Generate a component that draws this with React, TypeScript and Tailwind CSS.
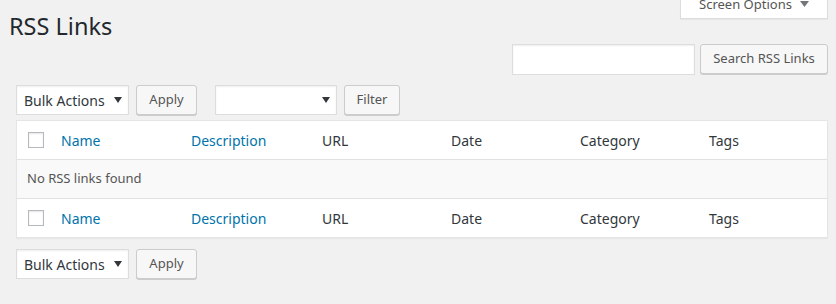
const cols = ['Name', 'Description', 'URL', 'Date', 'Category', 'Tags'];
const linked = ['Name', 'Description'];

function Caret() {
  return (
    <svg width="8" height="6" viewBox="0 0 8 6" className="shrink-0">
      <path d="M0 0h8L4 6z" fill="#32373c" />
    </svg>
  );
}

function Select({ label, width }: { label: string; width: string }) {
  return (
    <div
      className={`${width} flex h-[30px] items-center justify-between border border-[#ddd] bg-white pl-[7px] pr-[6px] text-[14px] text-[#32373c] shadow-[inset_0_1px_2px_rgba(0,0,0,0.07)]`}
    >
      <span>{label}</span>
      <Caret />
    </div>
  );
}

function Button({ label, width }: { label: string; width: string }) {
  return (
    <button
      className={`${width} h-[30px] rounded-[3px] border border-[#ccc] bg-[#f7f7f7] text-[13px] text-[#555] shadow-[0_1px_0_#ccc]`}
    >
      {label}
    </button>
  );
}

function Checkbox() {
  return (
    <div className="h-[16px] w-[16px] border border-[#b4b9be] bg-white shadow-[inset_0_1px_2px_rgba(0,0,0,0.1)]" />
  );
}

function HeaderRow({ top }: { top?: boolean }) {
  return (
    <div
      className={`grid h-[39px] grid-cols-[34px_130px_131px_129px_129px_129px_1fr] items-center bg-white ${top ? 'border-b' : 'border-t'} border-[#e1e1e1]`}
    >
      <div className="flex justify-end pr-[7px]">
        <Checkbox />
      </div>
      {cols.map((c) => (
        <div
          key={c}
          className={`pl-[10px] text-[14px] ${linked.includes(c) ? 'text-[#0073aa]' : 'text-[#32373c]'}`}
        >
          {c}
        </div>
      ))}
    </div>
  );
}

export default function App() {
  return (
    <div
      className="h-[304px] w-full overflow-hidden bg-[#f1f1f1]"
      style={{ fontFamily: '"Noto Sans", "Open Sans", sans-serif' }}
    >
      <div className="flex h-[44px] items-start justify-between pr-[8px]">
        <h1 className="ml-[9px] mt-[12px] text-[23.5px] leading-[29px] font-normal text-[#23282d]">
          RSS Links
        </h1>
        <div className="flex h-[19px] w-[148px] items-start justify-center gap-[8px] overflow-hidden border border-t-0 border-[#ddd] bg-white shadow-[0_1px_1px_rgba(0,0,0,0.04)]">
          <span className="-mt-[5px] text-[13px] leading-[18px] text-[#555]">Screen Options</span>
          <svg width="9" height="6" viewBox="0 0 9 6" className="mt-[1px]">
            <path d="M0 0h9L4.5 6z" fill="#72777c" />
          </svg>
        </div>
      </div>

      <div className="flex justify-end gap-[5px] pr-[8px]">
        <div className="h-[31px] w-[183px] border border-[#ddd] bg-white shadow-[inset_0_1px_2px_rgba(0,0,0,0.07)]" />
        <Button label="Search RSS Links" width="w-[128px]" />
      </div>

      <div className="ml-[16px] mt-[10px] flex items-center">
        <Select label="Bulk Actions" width="w-[113px]" />
        <div className="ml-[7px]">
          <Button label="Apply" width="w-[61px]" />
        </div>
        <div className="ml-[18px]">
          <Select label="" width="w-[122px]" />
        </div>
        <div className="ml-[7px]">
          <Button label="Filter" width="w-[56px]" />
        </div>
      </div>

      <div className="ml-[16px] mr-[8px] mt-[5px] border border-[#e5e5e5] bg-white shadow-[0_1px_1px_rgba(0,0,0,0.04)]">
        <HeaderRow top />
        <div className="flex h-[38px] items-center bg-[#f9f9f9] pl-[10px] text-[13px] text-[#555]">
          No RSS links found
        </div>
        <HeaderRow />
      </div>

      <div className="ml-[16px] mt-[11px] flex items-center">
        <Select label="Bulk Actions" width="w-[113px]" />
        <div className="ml-[7px]">
          <Button label="Apply" width="w-[61px]" />
        </div>
      </div>
    </div>
  );
}
